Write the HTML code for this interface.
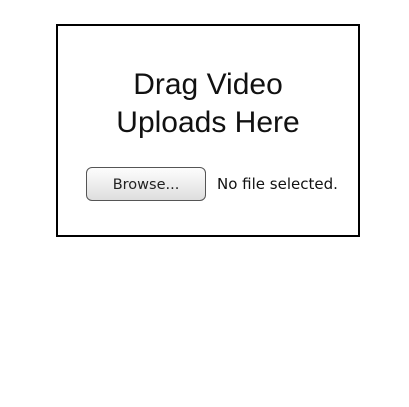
<!DOCTYPE html>
<html><head><style>
body{margin:0;width:409px;height:407px;background:#fff;position:relative;font-family:"DejaVu Sans",sans-serif;}
.box{position:absolute;left:56px;top:24px;width:300px;height:209px;border:2px solid #000;}
.t{position:absolute;left:0;width:300px;top:40px;text-align:center;font-family:"Liberation Sans",sans-serif;font-size:30px;line-height:38px;color:#111;}
.btn{position:absolute;left:28px;top:141px;border:1px solid #555;border-radius:6px;background:linear-gradient(#fdfdfd,#dedede);box-sizing:border-box;width:120px;height:34px;text-align:center;line-height:34px;font-size:14.5px;color:#222;}
.nf{position:absolute;left:159px;top:149px;font-size:15px;color:#111;}
</style></head><body>
<div class="box">
<div class="t">Drag Video<br>Uploads Here</div>
<div class="btn">Browse...</div>
<div class="nf">No file selected.</div>
</div>
</body></html>
